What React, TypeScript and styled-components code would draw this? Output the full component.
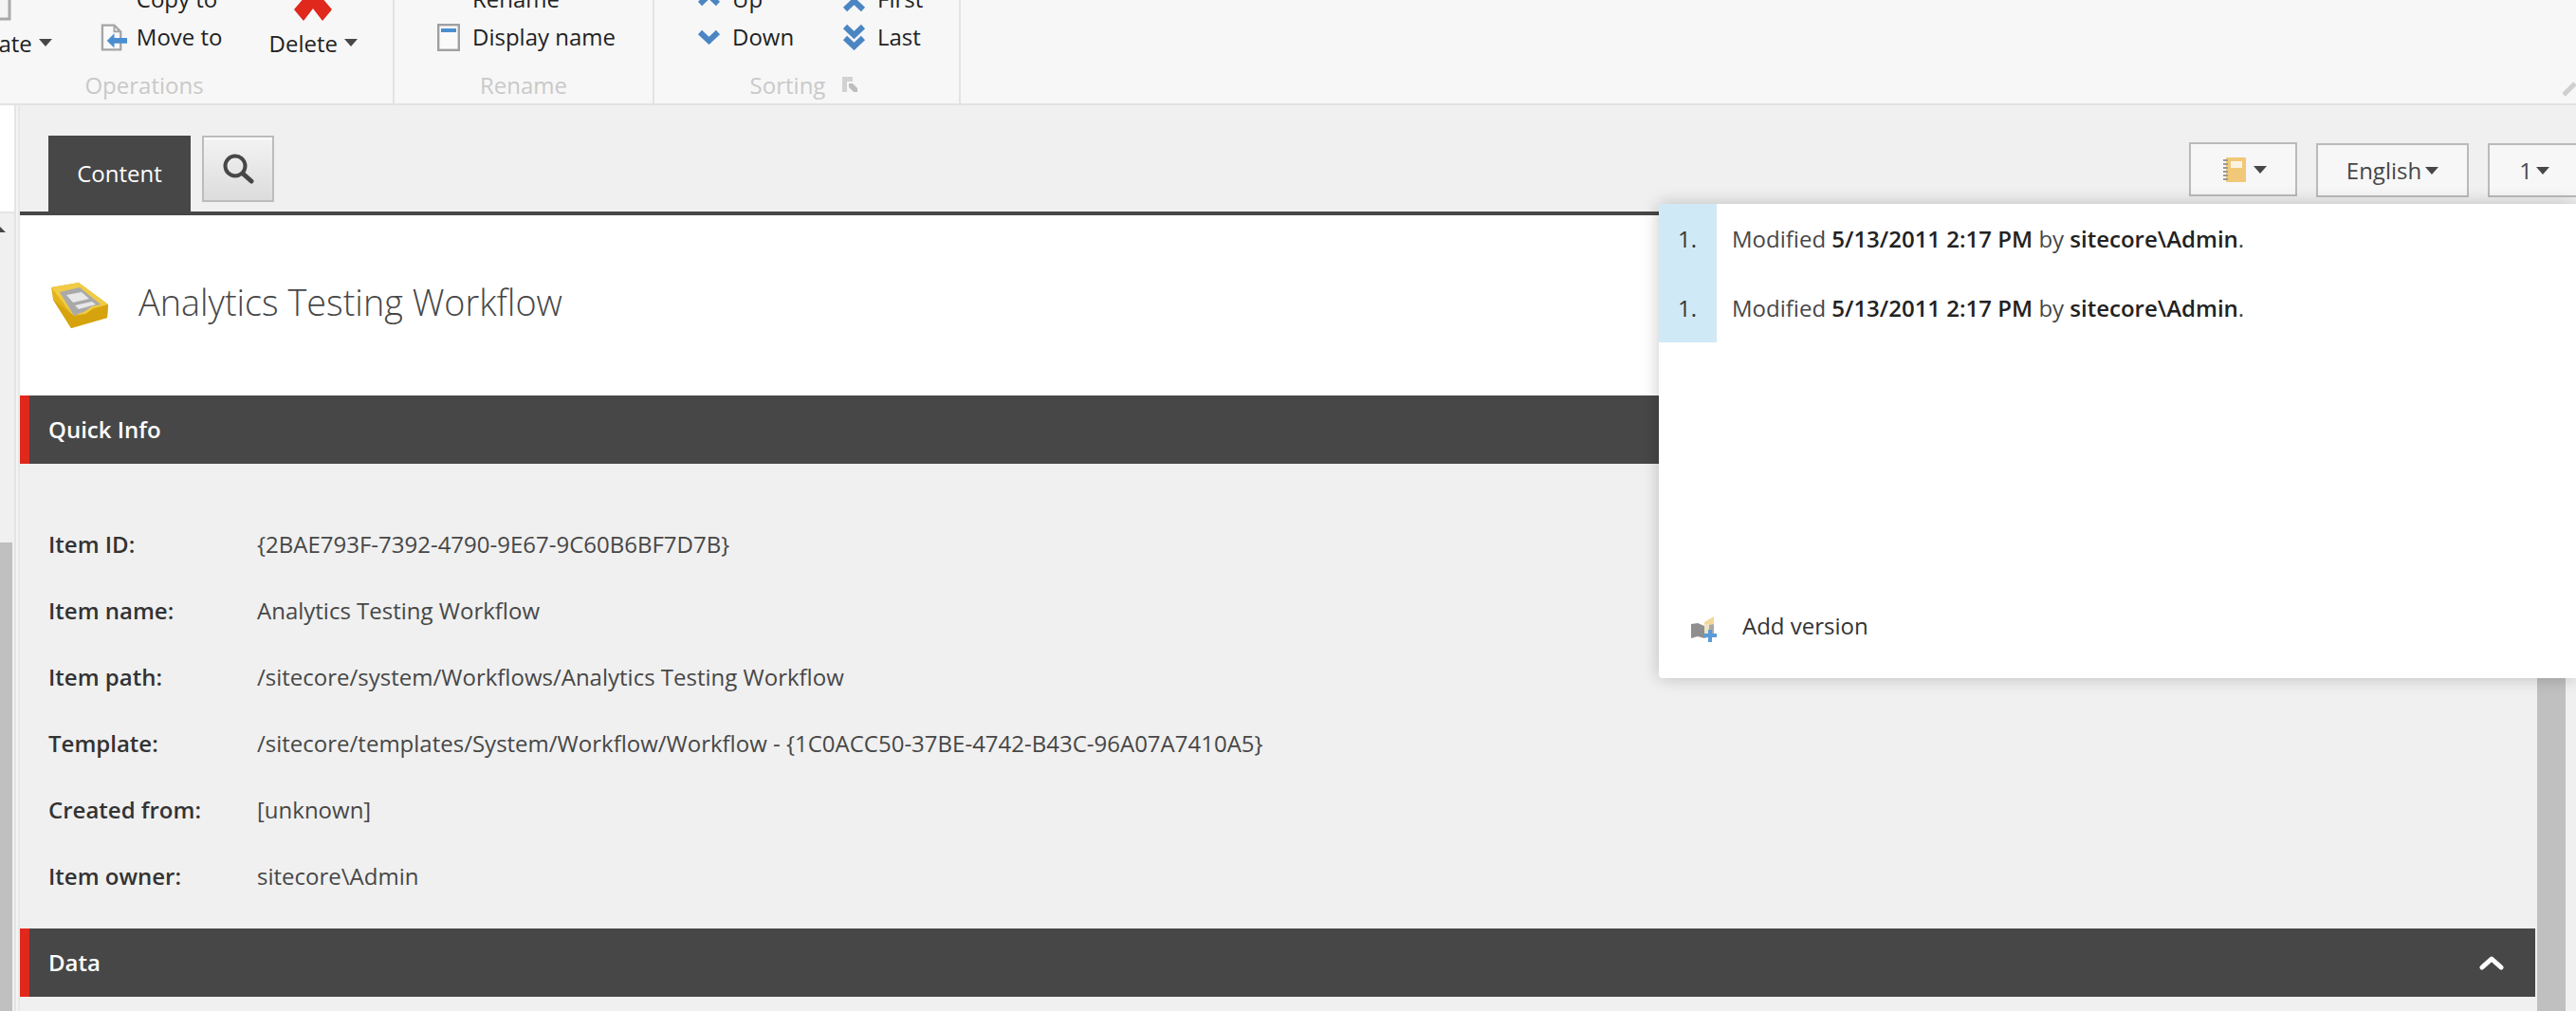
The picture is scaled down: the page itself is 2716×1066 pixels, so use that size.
import styled, { createGlobalStyle } from 'styled-components';

const GlobalStyle = createGlobalStyle`
  html, body {
    margin: 0;
    height: 1066px;
    overflow: hidden;
    background: #f0f0f0;
    font-family: "Open Sans", "Liberation Sans", sans-serif;
    color: #474747;
  }
`;

const Page = styled.div`
  display: flex;
  flex-direction: column;
  height: 1066px;
  overflow: hidden;
  position: relative;
`;

const Ribbon = styled.div`
  display: flex;
  align-items: flex-end;
  height: 109px;
  background: #f7f7f7;
  border-bottom: 2px solid #e3e3e3;
  overflow: hidden;
  flex: none;
`;

const Group = styled.div<{ $width: number; $offset?: number }>`
  display: flex;
  flex-direction: column;
  justify-content: flex-end;
  flex: none;
  width: ${(p) => p.$width}px;
  margin-left: ${(p) => p.$offset ?? 0}px;
  height: 109px;
  box-sizing: border-box;
  border-right: 2px solid #e3e3e3;
`;

const GroupBody = styled.div<{ $end?: boolean; $pad?: number }>`
  display: flex;
  flex: none;
  align-items: flex-end;
  justify-content: ${(p) => (p.$end ? 'flex-end' : 'flex-start')};
  padding: ${(p) => (p.$end ? `0 ${p.$pad ?? 0}px 0 0` : `0 0 0 ${p.$pad ?? 0}px`)};
`;

const GroupLabel = styled.div<{ $pr?: number }>`
  display: flex;
  flex: none;
  align-items: center;
  justify-content: center;
  gap: 18px;
  height: 49px;
  padding: 9px ${(p) => p.$pr ?? 0}px 0 0;
  box-sizing: border-box;
  font-size: 24px;
  color: #c9c9c9;
`;

const Stack = styled.div<{ $width?: number; $ml?: number }>`
  display: flex;
  flex-direction: column;
  width: ${(p) => (p.$width ? `${p.$width}px` : 'auto')};
  margin-left: ${(p) => p.$ml ?? 0}px;
  padding-bottom: 1px;
`;

const SmallButton = styled.div<{ $gap: number }>`
  display: flex;
  align-items: center;
  gap: ${(p) => p.$gap}px;
  height: 40px;
  font-size: 24px;
  color: #222;
  white-space: nowrap;
`;

const ButtonText = styled.span`
  margin-bottom: 2px;
`;

const IconSlot = styled.span<{ $width: number }>`
  display: flex;
  justify-content: center;
  width: ${(p) => p.$width}px;
  flex: none;
`;

const BigButton = styled.div<{ $ml: number }>`
  display: flex;
  flex-direction: column;
  align-items: center;
  margin-left: ${(p) => p.$ml}px;
  font-size: 24px;
  color: #222;
  white-space: nowrap;
`;

const BigLabel = styled.div`
  display: flex;
  align-items: center;
  gap: 7px;
  height: 30px;
  margin-top: 8px;
`;

const Caret = styled.span`
  display: inline-block;
  width: 0;
  height: 0;
  border-left: 7px solid transparent;
  border-right: 7px solid transparent;
  border-top: 8px solid #474747;
  flex: none;
`;

const CollapseIcon = styled.svg`
  margin-left: auto;
  margin-bottom: 7px;
  flex: none;
`;

const Workspace = styled.div`
  display: flex;
  flex: 1;
  min-height: 0;
`;

const Sidebar = styled.div`
  display: flex;
  flex-direction: column;
  width: 15px;
  flex: none;
  background: #f0f0f0;
`;

const SideTop = styled.div`
  height: 112px;
  background: #fff;
  border-bottom: 2px solid #e4e4e4;
  flex: none;
`;

const SideTree = styled.div`
  flex: 1;
  padding-top: 14px;
`;

const SideArrow = styled.div`
  width: 0;
  height: 0;
  border-right: 6px solid transparent;
  border-bottom: 6px solid #474747;
`;

const SideThumb = styled.div`
  width: 13px;
  height: 494px;
  background: #c0c0c0;
  flex: none;
`;

const Divider = styled.div`
  width: 2px;
  flex: none;
  background: #f4f4f4;
  border-left: 2px solid #e4e4e4;
  border-right: 2px solid #e8e8e8;
`;

const Main = styled.div`
  display: flex;
  flex-direction: column;
  flex: 1;
  min-width: 0;
`;

const TabBar = styled.div`
  display: flex;
  align-items: flex-end;
  height: 112px;
  padding-left: 30px;
  background: #f0f0f0;
  border-bottom: 4px solid #474747;
  flex: none;
`;

const Tab = styled.div`
  display: flex;
  align-items: center;
  justify-content: center;
  width: 150px;
  height: 80px;
  padding-bottom: 2px;
  box-sizing: border-box;
  background: #474747;
  color: #fff;
  font-size: 24px;
`;

const SearchButton = styled.div`
  display: flex;
  align-items: center;
  justify-content: center;
  width: 76px;
  height: 70px;
  box-sizing: border-box;
  margin: 0 0 10px 12px;
  border: 2px solid #bcbcbc;
  box-shadow: inset 0 2px 0 #fff;
  background: linear-gradient(#f3f3f3, #dcdcdc);
`;

const Versions = styled.div`
  display: flex;
  gap: 20px;
  margin: 0 -5px 15px auto;
`;

const Dropdown = styled.div<{ $width: number; $icon?: boolean }>`
  display: flex;
  align-items: center;
  justify-content: center;
  gap: ${(p) => (p.$icon ? 8 : 4)}px;
  width: ${(p) => p.$width}px;
  height: 57px;
  padding-left: ${(p) => (p.$icon ? 4 : 0)}px;
  box-sizing: border-box;
  border: 2px solid #bababa;
  background: #f7f7f7;
  font-size: 24px;
  color: #474747;
  position: relative;
  top: ${(p) => (p.$icon ? -1 : 0)}px;
`;

const ContentRow = styled.div`
  display: flex;
  flex: 1;
  min-height: 0;
`;

const Content = styled.div`
  flex: 1;
  min-width: 0;
`;

const Scrollbar = styled.div`
  width: 30px;
  margin: 0 11px 0 2px;
  background: #c0c0c0;
  flex: none;
`;

const TitleRow = styled.div`
  display: flex;
  align-items: center;
  gap: 32px;
  height: 190px;
  padding-left: 32px;
  background: #fff;
  box-sizing: border-box;
`;

const Title = styled.h1`
  margin: 0 0 8px;
  font-size: 37.8px;
  font-weight: 300;
  color: #474747;
`;

const SectionBar = styled.div`
  display: flex;
  align-items: center;
  justify-content: space-between;
  height: 72px;
  padding: 0 33px 0 20px;
  background: #474747;
  border-left: 10px solid #e0281c;
  color: #fff;
  font-size: 24px;
  font-weight: 600;
`;

const SectionTitle = styled.span`
  margin-bottom: 2px;
`;

const InfoTable = styled.div`
  padding: 49px 0 21px 30px;
`;

const InfoRow = styled.div`
  display: grid;
  grid-template-columns: 220px 1fr;
  align-items: center;
  height: 70px;
  font-size: 24px;
`;

const InfoLabel = styled.span`
  font-weight: 600;
  color: #333;
`;

const InfoValue = styled.span`
  color: #474747;
`;

const Popup = styled.div`
  position: absolute;
  top: 215px;
  left: 1749px;
  right: 0;
  height: 500px;
  display: flex;
  flex-direction: column;
  background: #fff;
  border-bottom-left-radius: 4px;
  box-shadow: 0 0 18px rgba(0, 0, 0, 0.22);
  font-size: 24px;
`;

const VersionRow = styled.div`
  display: grid;
  grid-template-columns: 61px 1fr;
  height: 73px;
`;

const VersionNumber = styled.div`
  display: flex;
  align-items: center;
  padding-left: 20px;
  background: #cfe9f6;
  color: #333;
`;

const VersionText = styled.div`
  display: flex;
  align-items: center;
  padding-left: 16px;
  color: #474747;
  white-space: pre;
`;

const Strong = styled.span`
  font-weight: 600;
  color: #222;
`;

const PopupFooter = styled.div`
  display: flex;
  align-items: center;
  gap: 26px;
  height: 104px;
  margin: auto 0 4px;
  padding-left: 34px;
  color: #333;
`;

const FooterIcon = styled.span`
  display: flex;
  margin-top: 8px;
`;

const Chevron = ({ double, up }: { double?: boolean; up?: boolean }) => (
  <svg width="25" height={double ? 28 : 16} viewBox={double ? '0 0 25 28' : '0 0 25 16'}>
    <g fill="none" stroke="#4b86c3" strokeWidth="6" transform={up ? `translate(0 ${double ? 28 : 16}) scale(1 -1)` : undefined}>
      <path d="M3 3l9.5 9 9.5-9" />
      {double && <path d="M3 15l9.5 9 9.5-9" />}
    </g>
  </svg>
);

const MoveIcon = () => (
  <svg width="29" height="29" viewBox="0 0 29 29">
    <path d="M2 1.2h13l7 7v19.6H2z" fill="#fafafa" stroke="#a5a5a5" strokeWidth="2.4" />
    <path d="M15 2v6h6" fill="none" stroke="#a5a5a5" strokeWidth="2" />
    <path d="M15 10v5h14v6H15v5l-8-8z" fill="#4b8ed0" />
  </svg>
);

const CopyIcon = () => (
  <svg width="29" height="29" viewBox="0 0 29 29">
    <path d="M2 -14h20V13H2z" fill="#fafafa" stroke="#a5a5a5" strokeWidth="2.4" />
    <path d="M15 -6v5h14v6H15v5l-8-8z" fill="#4b8ed0" />
  </svg>
);

const WindowIcon = () => (
  <svg width="24" height="29" viewBox="0 0 24 29">
    <rect x="1.2" y="1.2" width="21.6" height="26.6" fill="#fafafa" stroke="#a0a0a0" strokeWidth="2.4" />
    <rect x="4" y="5" width="16" height="4" fill="#4b8ed0" />
  </svg>
);

const RenameIcon = () => (
  <svg width="28" height="29" viewBox="0 0 28 29">
    <rect x="1" y="-14" width="26" height="19" fill="#fafafa" stroke="#7da7d2" strokeWidth="2.4" />
  </svg>
);

const DeleteIcon = () => (
  <svg width="40" height="48" viewBox="0 0 40 48">
    <path d="M0 36l12-14L4 8 14 0l6 8 6-8 10 8-8 14 12 14-10 12-10-13-10 13z" fill="#e0281c" />
  </svg>
);

const DuplicateIcon = () => (
  <svg width="56" height="48" viewBox="0 0 56 48">
    <path d="M28 2h19v44H28" fill="#f4f4f4" stroke="#a9a9a9" strokeWidth="3" />
  </svg>
);

const LauncherIcon = () => (
  <svg width="16" height="16" viewBox="0 0 16 16">
    <path d="M0 0h11v5H5v11H0z" fill="#d2d2d2" />
    <path d="M7 7h4l5 5v4h-4l-5-5z" fill="#bdbdbd" />
  </svg>
);

const TrayIcon = () => (
  <svg width="61" height="48" viewBox="0 0 61 48">
    <path d="M1 5L30 0l31 23-1 14-38 11L3 18z" fill="#e3b31a" />
    <path d="M1 5L30 0l31 23-16 4-8 6-13 2z" fill="#f0cb45" />
    <path d="M3 18l19 30 38-11 1-14-16 5-7 5-13 2z" fill="#d6a30f" />
    <path d="M10 10l21-5 22 18-9 2-7 5-12 5z" fill="#a9a9a9" />
    <path d="M17 13l16-3 8 7-17 4zM26 24l18-4 4 3-18 5z" fill="#e8e8e8" />
  </svg>
);

const SearchIcon = () => (
  <svg width="33" height="32" viewBox="0 0 33 32">
    <circle cx="13" cy="13" r="10.5" fill="none" stroke="#474747" strokeWidth="4" />
    <path d="M21 21l9 8" stroke="#474747" strokeWidth="5" strokeLinecap="round" />
  </svg>
);

const NotebookIcon = () => (
  <svg width="24" height="26" viewBox="0 0 24 26">
    <rect x="3" y="0" width="21" height="26" rx="1" fill="#f0c878" />
    <rect x="8" y="4" width="12" height="7" fill="#fbf3e0" />
    <path d="M0 3h5M0 7h5M0 11h5M0 15h5M0 19h5M0 23h5" stroke="#9a9a9a" strokeWidth="2" />
  </svg>
);

const AddVersionIcon = () => (
  <svg width="28" height="27" viewBox="0 0 28 27">
    <path d="M14 6l10-6v8l-2 10h-8z" fill="#f4d79a" />
    <path d="M0 8l7-1 7 3v13l-7-2-7 2z" fill="#8f8f8f" />
    <path d="M14 10l10-2v12l-10 3z" fill="#a8a8a8" />
    <path d="M14 8h5v14h-5z" fill="#f0e3c0" />
    <path d="M18 14h4v4h5v4h-5v5h-4v-5h-5v-4h5z" fill="#5b9bd8" />
  </svg>
);

const ChevronUp = () => (
  <svg width="26" height="18" viewBox="0 0 26 18">
    <path d="M3 14l10-9 10 9" fill="none" stroke="#fff" strokeWidth="5" strokeLinecap="round" strokeLinejoin="round" />
  </svg>
);

const info = [
  ['Item ID:', '{2BAE793F-7392-4790-9E67-9C60B6BF7D7B}'],
  ['Item name:', 'Analytics Testing Workflow'],
  ['Item path:', '/sitecore/system/Workflows/Analytics Testing Workflow'],
  ['Template:', '/sitecore/templates/System/Workflow/Workflow - {1C0ACC50-37BE-4742-B43C-96A07A7410A5}'],
  ['Created from:', '[unknown]'],
  ['Item owner:', 'sitecore\\Admin'],
];

const App = () => {
  return (
    <Page>
      <GlobalStyle />
      <Ribbon>
        <Group $width={526} $offset={-110}>
          <GroupBody $end $pad={37}>
            <BigButton $ml={0}>
              <DuplicateIcon />
              <BigLabel>
                Duplicate <Caret />
              </BigLabel>
            </BigButton>
            <Stack $ml={51}>
              <SmallButton $gap={10}>
                <IconSlot $width={28}>
                  <CopyIcon />
                </IconSlot>
                <ButtonText>Copy to</ButtonText>
              </SmallButton>
              <SmallButton $gap={10}>
                <IconSlot $width={28}>
                  <MoveIcon />
                </IconSlot>
                <ButtonText>Move to</ButtonText>
              </SmallButton>
            </Stack>
            <BigButton $ml={49}>
              <DeleteIcon />
              <BigLabel>
                Delete <Caret />
              </BigLabel>
            </BigButton>
          </GroupBody>
          <GroupLabel>Operations</GroupLabel>
        </Group>
        <Group $width={274}>
          <GroupBody $pad={43}>
            <Stack>
              <SmallButton $gap={11}>
                <IconSlot $width={28}>
                  <RenameIcon />
                </IconSlot>
                <ButtonText>Rename</ButtonText>
              </SmallButton>
              <SmallButton $gap={11}>
                <IconSlot $width={28}>
                  <WindowIcon />
                </IconSlot>
                <ButtonText>Display name</ButtonText>
              </SmallButton>
            </Stack>
          </GroupBody>
          <GroupLabel>Rename</GroupLabel>
        </Group>
        <Group $width={323}>
          <GroupBody $pad={45}>
            <Stack $width={153}>
              <SmallButton $gap={12}>
                <IconSlot $width={25}>
                  <Chevron up />
                </IconSlot>
                <ButtonText>Up</ButtonText>
              </SmallButton>
              <SmallButton $gap={12}>
                <IconSlot $width={25}>
                  <Chevron />
                </IconSlot>
                <ButtonText>Down</ButtonText>
              </SmallButton>
            </Stack>
            <Stack>
              <SmallButton $gap={12}>
                <IconSlot $width={25}>
                  <Chevron double up />
                </IconSlot>
                <ButtonText>First</ButtonText>
              </SmallButton>
              <SmallButton $gap={12}>
                <IconSlot $width={25}>
                  <Chevron double />
                </IconSlot>
                <ButtonText>Last</ButtonText>
              </SmallButton>
            </Stack>
          </GroupBody>
          <GroupLabel $pr={6}>
            Sorting
            <LauncherIcon />
          </GroupLabel>
        </Group>
        <CollapseIcon width="14" height="17" viewBox="0 0 14 17">
          <path d="M1 15L13 3" stroke="#cfcfcf" strokeWidth="5" fill="none" />
        </CollapseIcon>
      </Ribbon>
      <Workspace>
        <Sidebar>
          <SideTop />
          <SideTree>
            <SideArrow />
          </SideTree>
          <SideThumb />
        </Sidebar>
        <Divider />
        <Main>
          <TabBar>
            <Tab>Content</Tab>
            <SearchButton>
              <SearchIcon />
            </SearchButton>
            <Versions>
              <Dropdown $width={114} $icon>
                <NotebookIcon />
                <Caret />
              </Dropdown>
              <Dropdown $width={161}>
                English
                <Caret />
              </Dropdown>
              <Dropdown $width={98}>
                1
                <Caret />
              </Dropdown>
            </Versions>
          </TabBar>
          <ContentRow>
            <Content>
              <TitleRow>
                <TrayIcon />
                <Title>Analytics Testing Workflow</Title>
              </TitleRow>
              <SectionBar>
                <SectionTitle>Quick Info</SectionTitle>
                <ChevronUp />
              </SectionBar>
              <InfoTable>
                {info.map(([label, value]) => (
                  <InfoRow key={label}>
                    <InfoLabel>{label}</InfoLabel>
                    <InfoValue>{value}</InfoValue>
                  </InfoRow>
                ))}
              </InfoTable>
              <SectionBar>
                <SectionTitle>Data</SectionTitle>
                <ChevronUp />
              </SectionBar>
            </Content>
            <Scrollbar />
          </ContentRow>
        </Main>
      </Workspace>
      <Popup>
        {[0, 1].map((i) => (
          <VersionRow key={i}>
            <VersionNumber>1.</VersionNumber>
            <VersionText>
              Modified <Strong>5/13/2011 2:17 PM</Strong> by <Strong>sitecore\Admin</Strong>.
            </VersionText>
          </VersionRow>
        ))}
        <PopupFooter>
          <FooterIcon>
            <AddVersionIcon />
          </FooterIcon>
          Add version
        </PopupFooter>
      </Popup>
    </Page>
  );
};

export default App;
